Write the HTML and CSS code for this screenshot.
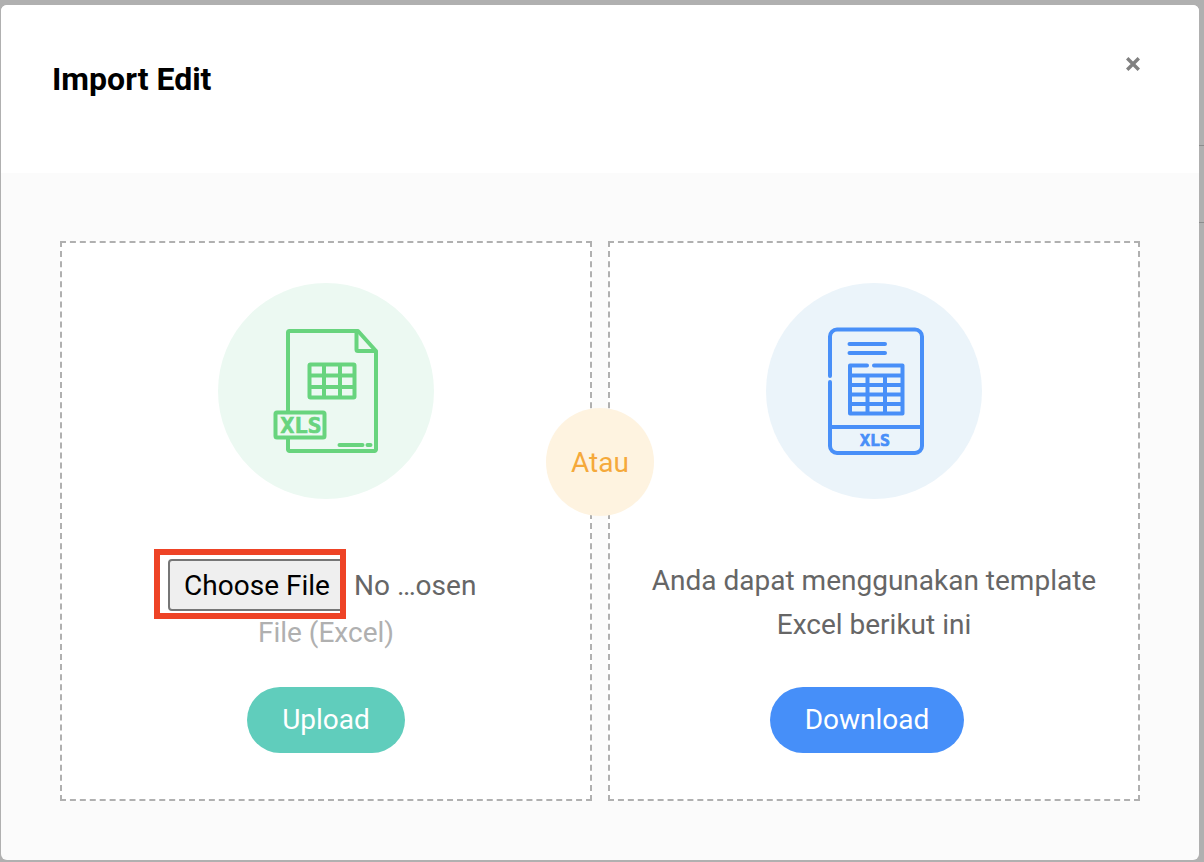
FILE: index.html
```html
<!DOCTYPE html>
<html lang="id">
<head>
<meta charset="utf-8">
<title>Import Edit</title>
<link rel="stylesheet" href="styles.css">
</head>
<body>
<div class="backdrop-line line-a"></div>
<div class="backdrop-line line-b"></div>
<main class="dialog">
  <header class="dialog-head">
    <h1 class="dialog-title">Import Edit</h1>
    <button class="close" aria-label="Close">
      <svg width="14" height="14" viewBox="0 0 14 14"><path d="M1.2 1.2 12.8 12.8M12.800 1.2 1.2 12.8" class="close-x"/></svg>
    </button>
  </header>
  <section class="dialog-body">
    <div class="panel">
      <div class="disc disc-green">
        <svg class="icon" width="216" height="216" viewBox="218 283 216 216">
          <g class="stroke-green">
            <path d="M288 411V332.500a1.500 1.500 0 0 1 1.500-1.500H358L376 351V449.500a1.500 1.500 0 0 1-1.500 1.500H289.500a1.500 1.500 0 0 1-1.500-1.500V438"/>
            <path d="M356.500 331V349.500a1.500 1.500 0 0 0 1.500 1.500H376"/>
            <rect x="275.500" y="412.500" width="49" height="25" rx="1.500"/>
            <rect x="309.500" y="364.500" width="45" height="33" rx="1"/>
            <path d="M309.500 375.500H354.500M309.500 387H354.500M324 364.500V397.500M340 364.500V397.500"/>
            <path d="M339.500 445H362.500M367.500 445H370.500" class="round"/>
          </g>
          <text x="301" y="432.500" class="xls xls-green" textLength="41" lengthAdjust="spacingAndGlyphs">XLS</text>
        </svg>
      </div>
      <div class="file-row">
        <span class="file-btn">Choose File</span>
        <span class="file-name">No …osen</span>
        <span class="annotation"></span>
      </div>
      <p class="file-hint">File (Excel)</p>
      <button class="pill pill-upload">Upload</button>
    </div>
    <div class="panel">
      <div class="disc disc-blue">
        <svg class="icon" width="216" height="216" viewBox="766 283 216 216">
          <g class="stroke-blue">
            <path class="round" d="M830 376V336.500a7 7 0 0 1 7-7H915a7 7 0 0 1 7 7V446a7 7 0 0 1-7 7H837a7 7 0 0 1-7-7V382"/>
            <path d="M830 427H922"/>
            <path class="round" d="M849.500 344H885M849.500 353H885"/>
            <path class="round" d="M867 365.500H850V413.500H902.500V365.500H874"/>
            <path d="M850 375.500H902.500M850 385H902.500M850 394.500H902.500M850 404H902.500M867.500 375.500V413.500M885 375.500V413.500"/>
          </g>
          <text x="875" y="446" class="xls xls-blue" textLength="30" lengthAdjust="spacingAndGlyphs">XLS</text>
        </svg>
      </div>
      <p class="template-text">Anda dapat menggunakan template<br>Excel berikut ini</p>
      <button class="pill pill-download">Download</button>
    </div>
    <div class="or-badge">Atau</div>
  </section>
</main>
</body>
</html>
```

FILE: styles.css
```css
* {
  box-sizing: border-box;
}

html,
body {
  height: 100%;
}

body {
  margin: 0;
  padding: 5px 5px 2px 1px;
  background: #b0b0b0;
  font-family: Roboto, "Liberation Sans", sans-serif;
  overflow: hidden;
  position: relative;
}

.backdrop-line {
  position: absolute;
  right: 0;
  width: 5px;
  height: 1px;
  background: #8c8c8c;
}

.line-a {
  top: 145px;
}

.line-b {
  top: 222px;
}

.dialog {
  height: 855px;
  display: flex;
  flex-direction: column;
  border-radius: 6px;
  overflow: hidden;
  background: #fbfbfb;
}

.dialog-head {
  height: 168px;
  flex: none;
  background: #fff;
  display: flex;
  justify-content: space-between;
  align-items: flex-start;
  padding: 52px 59px 0 51px;
}

.dialog-title {
  margin: 0;
  font-size: 32px;
  line-height: 44px;
  font-weight: 700;
  color: #000;
}

.close {
  border: 0;
  background: none;
  padding: 0;
  line-height: 0;
}

.close-x {
  fill: none;
  stroke: #808080;
  stroke-width: 3.4;
}

.dialog-body {
  flex: 1;
  position: relative;
  display: flex;
  gap: 16px;
  padding: 68px 59px 60px 59px;
}

.panel {
  flex: 1;
  height: 560px;
  background: #fff;
  border: 2px dashed #b0b0b0;
  display: flex;
  flex-direction: column;
  align-items: center;
  padding-top: 40px;
}

.disc {
  width: 216px;
  height: 216px;
  border-radius: 50%;
  flex: none;
  margin-bottom: 60px;
}

.disc-green {
  background: #ecf9f2;
}

.disc-blue {
  background: #ebf4fa;
}

.icon {
  display: block;
}

.stroke-green,
.stroke-blue {
  fill: none;
  stroke-width: 4;
  stroke-linejoin: round;
}

.stroke-green {
  stroke: #68d47e;
}

.stroke-blue {
  stroke: #488ff8;
}

.round {
  stroke-linecap: round;
}

.xls {
  font-family: "DejaVu Sans Mono", monospace;
  font-weight: 700;
  text-anchor: middle;
  stroke-width: 0.7px;
}

.xls-green {
  font-size: 21px;
  fill: #68d47e;
  stroke: #68d47e;
}

.xls-blue {
  font-size: 16px;
  fill: #488ff8;
  stroke: #488ff8;
}

.file-row {
  position: relative;
  display: flex;
  align-items: center;
  height: 52px;
  width: 308px;
  margin-left: -8px;
  flex: none;
}

.file-btn {
  width: 178px;
  height: 52px;
  flex: none;
  display: flex;
  align-items: center;
  justify-content: center;
  border: 2px solid #767676;
  border-radius: 4px;
  background: #efefef;
  color: #000;
  font-size: 28px;
}

.file-name {
  margin-left: 8px;
  font-size: 28px;
  color: #666;
  white-space: nowrap;
}

.annotation {
  position: absolute;
  left: -14px;
  top: -10px;
  width: 192px;
  height: 70px;
  border: 6px solid #ee4326;
}

.file-hint {
  margin: 1px 0 32px;
  font-size: 28px;
  line-height: 42px;
  height: 43px;
  color: #b0b0b0;
}

.template-text {
  margin: 0 0 40px;
  font-size: 28px;
  line-height: 44px;
  color: #666;
  text-align: center;
}

.pill {
  border: 0;
  height: 66px;
  border-radius: 33px;
  color: #fff;
  font-family: inherit;
  font-size: 28px;
  padding: 0 0 2px;
}

.pill-upload {
  width: 158px;
  background: #60cdbc;
}

.pill-download {
  width: 194px;
  margin-right: 14px;
  background: #468ff9;
}

.or-badge {
  position: absolute;
  left: 545px;
  top: 235px;
  width: 108px;
  height: 108px;
  border-radius: 50%;
  background: #fef3e0;
  color: #f5a93b;
  font-size: 28px;
  display: flex;
  align-items: center;
  justify-content: center;
}
```
